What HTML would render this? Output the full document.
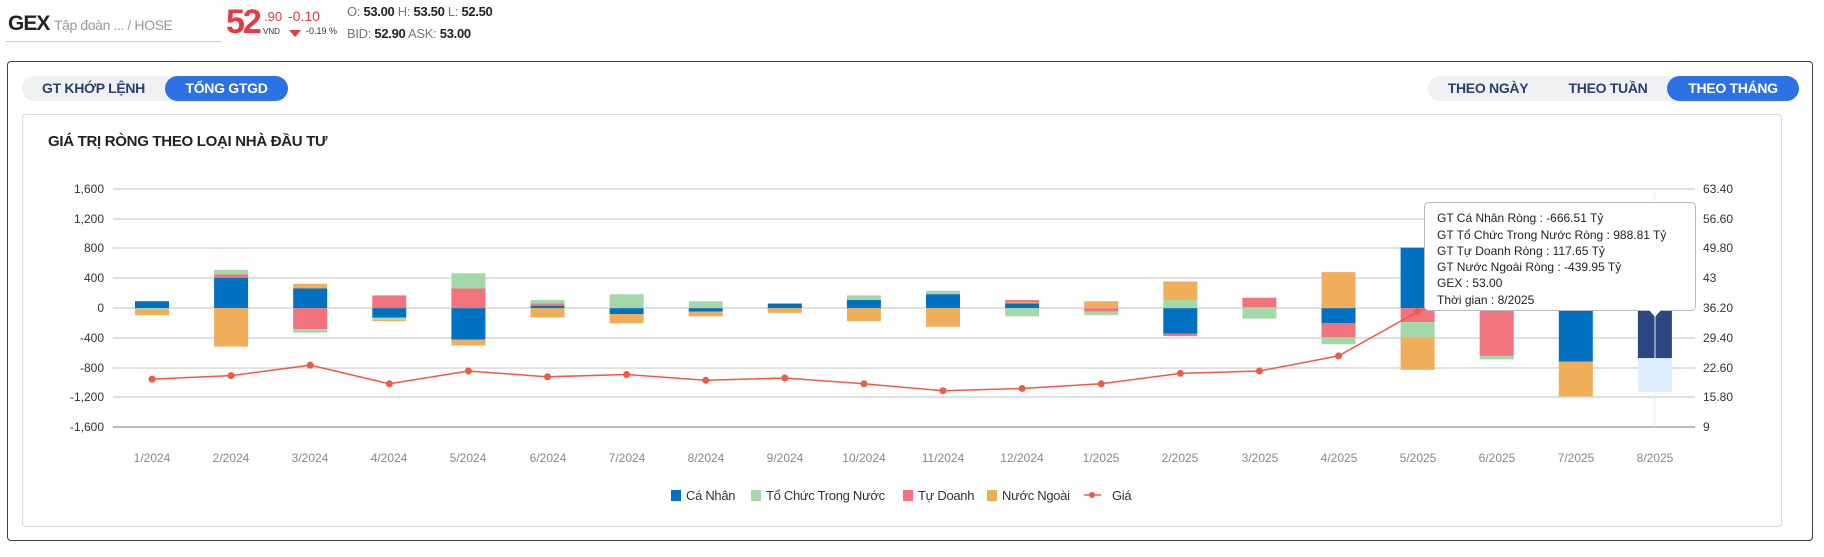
<!DOCTYPE html>
<html><head><meta charset="utf-8"><style>
*{margin:0;padding:0;box-sizing:border-box}
body{width:1824px;height:557px;background:#fff;font-family:"Liberation Sans",sans-serif;position:relative;overflow:hidden;color:#333}
.a{position:absolute;white-space:nowrap}
.panel{position:absolute;left:7px;top:61px;width:1806px;height:480px;border:1px solid #3a3f4a;border-radius:4px}
.inner{position:absolute;left:22px;top:114px;width:1760px;height:413px;border:1px solid #d9d9d9;border-radius:4px}
.tog{position:absolute;height:25px;background:#f0f1f3;border-radius:13px;font-size:14px;font-weight:bold;color:#2c3e6e;letter-spacing:-0.3px}
.tog span{position:absolute;top:0;height:25px;line-height:25px;text-align:center;border-radius:13px;white-space:nowrap}
.tog .on{background:#2d72e4;color:#fff}
</style></head><body>
<div class="a" style="left:8px;top:12px;font-size:21px;font-weight:bold;color:#222;letter-spacing:-1px">GEX</div>
<div class="a" style="left:54px;top:17px;font-size:14px;color:#999;letter-spacing:-0.4px">Tập đoàn ... / HOSE</div>
<div class="a" style="left:6px;top:41px;width:215px;height:1px;background:#ccc"></div>
<div class="a" style="left:226px;top:3px;font-size:34px;font-weight:bold;color:#e63946;letter-spacing:-2px">52</div>
<div class="a" style="left:264px;top:9px;font-size:13px;color:#e63946">.90</div>
<div class="a" style="left:263px;top:27px;font-size:8px;color:#333">VND</div>
<div class="a" style="left:288px;top:8px;font-size:14px;color:#e63946">-0.10</div>
<div class="a" style="left:289px;top:30px;width:0;height:0;border-left:6px solid transparent;border-right:6px solid transparent;border-top:7px solid #e63946"></div>
<div class="a" style="left:306px;top:26px;font-size:9px;color:#333">-0.19 %</div>
<div class="a" style="left:347px;top:4px;font-size:13px;color:#777;letter-spacing:-0.3px">O: <b style="color:#222">53.00</b> H: <b style="color:#222">53.50</b> L: <b style="color:#222">52.50</b></div>
<div class="a" style="left:347px;top:26px;font-size:13px;color:#777;letter-spacing:-0.3px">BID: <b style="color:#222">52.90</b> ASK: <b style="color:#222">53.00</b></div>
<div class="panel"></div>
<div class="tog" style="left:22px;top:76px;width:266px"><span style="left:0;width:143px">GT KHỚP LỆNH</span><span class="on" style="left:143px;width:123px">TỔNG GTGD</span></div>
<div class="tog" style="left:1428px;top:76px;width:371px"><span style="left:0;width:120px">THEO NGÀY</span><span style="left:120px;width:120px">THEO TUẦN</span><span class="on" style="left:239px;width:132px">THEO THÁNG</span></div>
<div class="inner"></div>
<div class="a" style="left:48px;top:133px;font-size:15px;font-weight:bold;color:#222;letter-spacing:-0.3px">GIÁ TRỊ RÒNG THEO LOẠI NHÀ ĐẦU TƯ</div>
<svg class="a" style="left:0;top:0" width="1824" height="557" font-family="Liberation Sans,sans-serif">
<g stroke="#e0e0e0" stroke-width="2">
<line x1="113" x2="1695" y1="189" y2="189"/><line x1="113" x2="1695" y1="219" y2="219"/><line x1="113" x2="1695" y1="248" y2="248"/><line x1="113" x2="1695" y1="278" y2="278"/><line x1="113" x2="1695" y1="308" y2="308"/><line x1="113" x2="1695" y1="338" y2="338"/><line x1="113" x2="1695" y1="368" y2="368"/><line x1="113" x2="1695" y1="397" y2="397"/><line x1="113" x2="1695" y1="427" y2="427" stroke="#bbb"/>
</g>
<g font-size="12" fill="#333" text-anchor="end">
<text x="104" y="193">1,600</text><text x="104" y="223">1,200</text><text x="104" y="252">800</text><text x="104" y="282">400</text><text x="104" y="312">0</text><text x="104" y="342">-400</text><text x="104" y="372">-800</text><text x="104" y="401">-1,200</text><text x="104" y="431">-1,600</text>
</g>
<g font-size="12" fill="#333">
<text x="1703" y="193">63.40</text><text x="1703" y="223">56.60</text><text x="1703" y="252">49.80</text><text x="1703" y="282">43</text><text x="1703" y="312">36.20</text><text x="1703" y="342">29.40</text><text x="1703" y="372">22.60</text><text x="1703" y="401">15.80</text><text x="1703" y="431">9</text>
</g>
<g font-size="12" fill="#888" text-anchor="middle">
<text x="152" y="462">1/2024</text><text x="231" y="462">2/2024</text><text x="310" y="462">3/2024</text><text x="389" y="462">4/2024</text><text x="468" y="462">5/2024</text><text x="548" y="462">6/2024</text><text x="627" y="462">7/2024</text><text x="706" y="462">8/2024</text><text x="785" y="462">9/2024</text><text x="864" y="462">10/2024</text><text x="943" y="462">11/2024</text><text x="1022" y="462">12/2024</text><text x="1101" y="462">1/2025</text><text x="1180" y="462">2/2025</text><text x="1260" y="462">3/2025</text><text x="1339" y="462">4/2025</text><text x="1418" y="462">5/2025</text><text x="1497" y="462">6/2025</text><text x="1576" y="462">7/2025</text><text x="1655" y="462">8/2025</text>
</g>
<g id="bars"></g>
<g id="line"></g>
<g font-size="13" fill="#333" letter-spacing="-0.3">
<rect x="671" y="490" width="10" height="11" fill="#0070c0"/><text x="686" y="500">Cá Nhân</text>
<rect x="751" y="490" width="10" height="11" fill="#a3d9a8"/><text x="766" y="500">Tổ Chức Trong Nước</text>
<rect x="903" y="490" width="10" height="11" fill="#f0737e"/><text x="918" y="500">Tự Doanh</text>
<rect x="987" y="490" width="10" height="11" fill="#f0ad5a"/><text x="1002" y="500">Nước Ngoài</text>
<line x1="1084" x2="1101" y1="495" y2="495" stroke="#ef5a45" stroke-width="1.5"/><circle cx="1092" cy="495" r="3" fill="#ef5a45"/><text x="1112" y="500">Giá</text>
</g>
<g id="tip">
<rect x="1424.5" y="202.5" width="271" height="108" rx="4" fill="#fff" stroke="#bbb"/>
<path d="M1649 310 L1655 317 L1661 310 Z" fill="#fff"/>
<g font-size="12" fill="#222">
<text x="1437" y="222">GT Cá Nhân Ròng  : -666.51 Tỷ</text>
<text x="1437" y="239">GT Tổ Chức Trong Nước Ròng : 988.81 Tỷ</text>
<text x="1437" y="255">GT Tự Doanh Ròng : 117.65 Tỷ</text>
<text x="1437" y="271">GT Nước Ngoài Ròng : -439.95 Tỷ</text>
<text x="1437" y="287">GEX : 53.00</text>
<text x="1437" y="304">Thời gian : 8/2025</text>
</g></g>
</svg>
<script>
var C={b:"#0070c0",g:"#a3d9a8",r:"#f0737e",o:"#f0ad5a",n:"#2b4680",l:"#deeeff"};
var D=[
[["b",259,265],["g",265,266],["o",266,271]],
[["g",232,236],["r",236,239],["b",239,265],["o",265,298]],
[["o",244,248],["b",248,265],["r",265,283],["g",283,286]],
[["r",254,265],["b",265,273],["g",273,275],["o",275,276]],
[["g",235,248],["r",248,265],["b",265,292],["o",292,297]],
[["g",258,261],["r",261,263],["b",263,265],["o",265,273]],
[["g",253,265],["b",265,270],["o",270,278]],
[["g",259,265],["b",265,268],["o",268,272]],
[["b",261,265],["o",265,269]],
[["g",254,258],["b",258,265],["o",265,276]],
[["g",250,253],["b",253,265],["o",265,281]],
[["r",258,260],["o",260,261],["b",261,265],["g",265,272]],
[["o",259,265],["r",265,268],["g",268,271]],
[["o",242,258],["g",258,265],["b",265,287],["r",287,289]],
[["r",256,264],["o",264,265],["g",265,274]],
[["o",234,265],["b",265,278],["r",278,290],["g",290,296]],
[["b",213,265],["r",265,277],["g",277,290],["o",290,318]],
[["g",240,265],["r",265,306],["g",306,309]],
[["b",265,311],["o",311,341]],
[["n",265,308],["l",308,337]]];
var s="",k=1.163;
D.forEach(function(m,i){var cx=152+i*79.1;m.forEach(function(q){s+='<rect x="'+(cx-17)+'" y="'+(q[1]*k)+'" width="34" height="'+((q[2]-q[1])*k)+'" fill="'+C[q[0]]+'"/>';});});
s+='<line x1="1655" x2="1655" y1="189" y2="427" stroke="#e8eefc"/>';
document.getElementById("bars").innerHTML=s;
var P=[326,323,314,330,319,324,322,327,325,330,336,334,330,321,319,306,268,250,215,200],pts=[],c="";
P.forEach(function(y,i){var x=152+i*79.1,yy=y*k;pts.push(x+","+yy);c+='<circle cx="'+x+'" cy="'+yy+'" r="3.5" fill="#ef5a45"/>';});
document.getElementById("line").innerHTML='<polyline points="'+pts.join(" ")+'" fill="none" stroke="#ef5a45" stroke-width="1.5"/>'+c;
</script>
</body></html>
